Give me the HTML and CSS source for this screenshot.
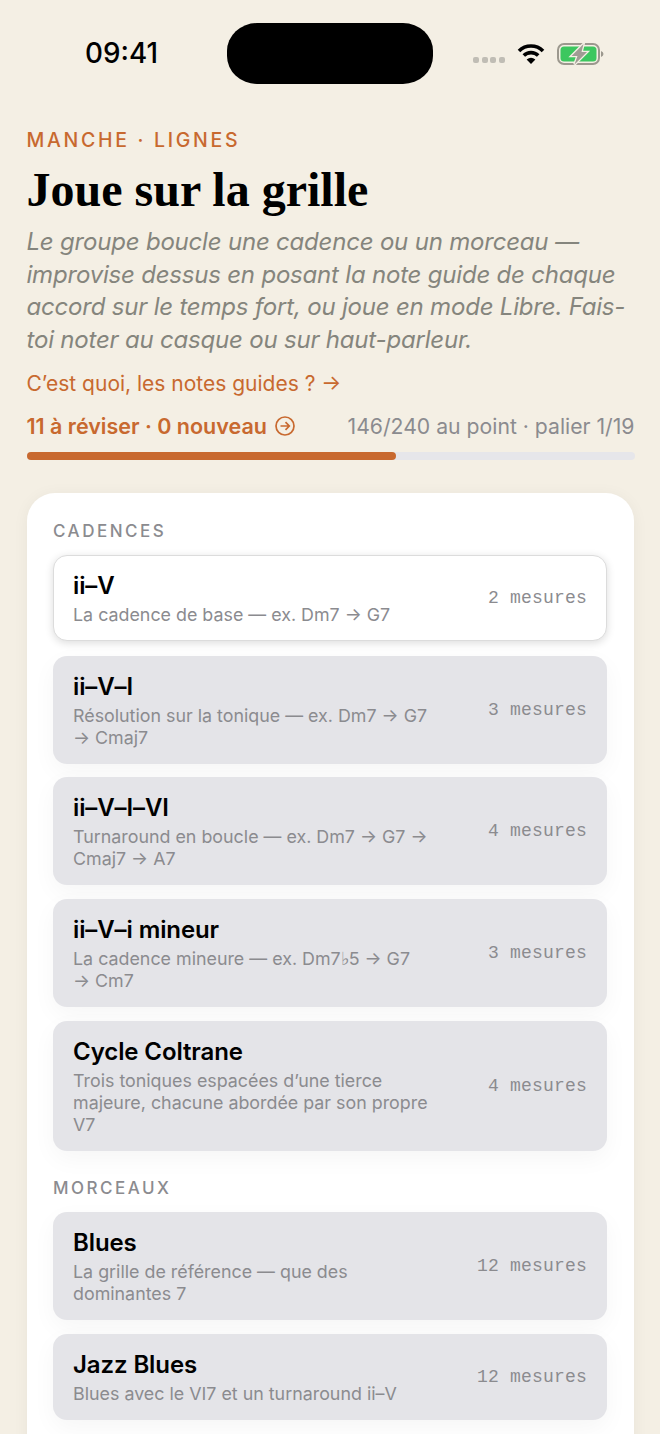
FILE: index.html
```html
<!DOCTYPE html>
<html lang="fr">
<head>
    <meta charset="UTF-8">
    <meta name="viewport" content="width=device-width, initial-scale=1.0">
    <title>Joue sur la grille</title>
    <link rel="stylesheet" href="styles.css">
</head>
<body>
    <div class="statusbar">
        <div class="time">09:41</div>
        <div class="island"></div>
        <div class="status-icons">
            <div class="signal"><span></span><span></span><span></span><span></span></div>
            <svg class="wifi" width="28" height="22" viewBox="0 0 28 22">
                <path d="M2 8A17 17 0 0 1 26 8" fill="none" stroke="#000" stroke-width="3.6"/>
                <path d="M6.8 12.6A10.2 10.2 0 0 1 21.2 12.6" fill="none" stroke="#000" stroke-width="3.6"/>
                <path d="M14 21L9.6 16.4Q14 13.2 18.4 16.4Z" fill="#000"/>
            </svg>
            <svg class="battery" width="47" height="22" viewBox="0 0 47 22">
                <rect x="1" y="1" width="41" height="20" rx="6" fill="none" stroke="#9c988e" stroke-width="2"/>
                <rect x="3.5" y="3.5" width="36" height="15" rx="3.5" fill="#3cc75f"/>
                <path d="M44 8Q46.5 9 46.5 11T44 14Z" fill="#9c988e"/>
                <path d="M26.5 1L14.5 13H20.5L17.5 21.5L30 9H24.5Z" fill="#a09c94" stroke="#f4efe4" stroke-width="2.6" paint-order="stroke"/>
            </svg>
        </div>
    </div>

    <div class="header">
        <div class="eyebrow">MANCHE · LIGNES</div>
        <h1>Joue sur la grille</h1>
        <p class="intro">Le groupe boucle une cadence ou un morceau — improvise dessus en posant la note guide de chaque accord sur le temps fort, ou joue en mode Libre. Fais-toi noter au casque ou sur haut-parleur.</p>
        <a class="guide-link">C’est quoi, les notes guides ? →</a>
        <div class="stats">
            <div class="review">
                <span>11 à réviser · 0 nouveau</span>
                <svg width="20" height="20" viewBox="0 0 20 20" fill="none" stroke="#c8692f" stroke-width="1.7">
                    <circle cx="10" cy="10" r="9"/>
                    <path d="M5.5 10H14.2M10.5 6.2L14.3 10L10.5 13.8"/>
                </svg>
            </div>
            <div class="progress-text">146/240 au point · palier 1/19</div>
        </div>
        <div class="progress"><div class="progress-fill" style="width: 60.8%"></div></div>
    </div>

    <div class="card">
        <div class="section-title">CADENCES</div>
        <div class="row-list">
            <div class="row selected">
                <div class="row-text">
                    <div class="row-title">ii–V</div>
                    <div class="row-sub">La cadence de base — ex. Dm7 → G7</div>
                </div>
                <div class="row-meta">2 mesures</div>
            </div>
            <div class="row">
                <div class="row-text">
                    <div class="row-title">ii–V–I</div>
                    <div class="row-sub">Résolution sur la tonique — ex. Dm7 → G7 → Cmaj7</div>
                </div>
                <div class="row-meta">3 mesures</div>
            </div>
            <div class="row">
                <div class="row-text">
                    <div class="row-title">ii–V–I–VI</div>
                    <div class="row-sub">Turnaround en boucle — ex. Dm7 → G7 → Cmaj7 → A7</div>
                </div>
                <div class="row-meta">4 mesures</div>
            </div>
            <div class="row">
                <div class="row-text">
                    <div class="row-title">ii–V–i mineur</div>
                    <div class="row-sub">La cadence mineure — ex. Dm7♭5 → G7 →&nbsp;Cm7</div>
                </div>
                <div class="row-meta">3 mesures</div>
            </div>
            <div class="row">
                <div class="row-text">
                    <div class="row-title">Cycle Coltrane</div>
                    <div class="row-sub">Trois toniques espacées d’une tierce majeure, chacune abordée par son propre V7</div>
                </div>
                <div class="row-meta">4 mesures</div>
            </div>
        </div>

        <div class="section-title second">MORCEAUX</div>
        <div class="row-list">
            <div class="row">
                <div class="row-text">
                    <div class="row-title">Blues</div>
                    <div class="row-sub">La grille de référence — que des dominantes 7</div>
                </div>
                <div class="row-meta">12 mesures</div>
            </div>
            <div class="row">
                <div class="row-text">
                    <div class="row-title">Jazz Blues</div>
                    <div class="row-sub">Blues avec le VI7 et un turnaround ii–V</div>
                </div>
                <div class="row-meta">12 mesures</div>
            </div>
        </div>
    </div>
</body>
</html>
```

FILE: styles.css
```css
:root {
    --bg-color: #f4efe4;
    --accent-color: #c8692f;
    --row-color: #e4e4e8;
    --text-muted: #85857d;
    --text-grey: #8b8b8f;
}

* {
    margin: 0;
    padding: 0;
    box-sizing: border-box;
}

html, body {
    height: 1434px;
    overflow: hidden;
}

body {
    background-color: var(--bg-color);
    color: #000;
    font-family: Inter, 'Noto Sans', sans-serif;
}

.statusbar {
    display: grid;
    grid-template-columns: 227px 206px 1fr;
    padding-top: 23px;
    height: 83px;
}

.time {
    padding-left: 85px;
    font-size: 27.8px;
    font-weight: 500;
    line-height: 61px;
}

.island {
    background-color: #000;
    border-radius: 30px / 28px;
}

.status-icons {
    display: flex;
    align-items: center;
    padding-left: 40px;
}

.signal {
    display: flex;
    gap: 2.5px;
    margin-top: 13px;
    margin-right: 12px;
}

.signal span {
    width: 6px;
    height: 6px;
    border-radius: 2px;
    background-color: #c0bdb5;
}

.wifi {
    margin-right: 12px;
}

.header {
    padding: 47px 25.5px 0 26.5px;
}

.eyebrow {
    color: var(--accent-color);
    font-size: 19.5px;
    font-weight: 500;
    letter-spacing: 2.7px;
    line-height: 20px;
}

h1 {
    font-family: 'Liberation Serif', serif;
    font-size: 48px;
    font-weight: 700;
    line-height: 60px;
    margin-top: 10px;
}

.intro {
    color: var(--text-muted);
    font-size: 24px;
    font-style: italic;
    letter-spacing: -0.2px;
    line-height: 32.6px;
    margin-top: 6px;
}

.guide-link {
    display: block;
    color: var(--accent-color);
    font-size: 21px;
    line-height: 26px;
    margin-top: 15px;
}

.stats {
    display: flex;
    align-items: center;
    justify-content: space-between;
    margin-top: 15px;
    line-height: 28px;
}

.review {
    display: flex;
    align-items: center;
    gap: 8px;
    color: var(--accent-color);
    font-size: 21.5px;
    font-weight: 600;
}

.progress-text {
    color: var(--text-grey);
    font-size: 21.2px;
}

.progress {
    height: 8px;
    margin-top: 12px;
    border-radius: 4px;
    background-color: #e6e6ea;
}

.progress-fill {
    height: 100%;
    border-radius: 4px;
    background-color: var(--accent-color);
}

.card {
    margin: 33px 26px 0 26.5px;
    padding: 26.8px 27px 60px 26.5px;
    border-radius: 28px;
    background-color: #fff;
    box-shadow: 0 2px 16px rgba(0, 0, 0, 0.05);
}

.section-title {
    color: var(--text-grey);
    font-size: 17px;
    font-weight: 500;
    letter-spacing: 2.5px;
    line-height: 22px;
    margin-bottom: 13px;
}

.section-title.second {
    margin-top: 26.4px;
}

.row-list {
    display: flex;
    flex-direction: column;
    gap: 13.5px;
}

.row {
    display: flex;
    align-items: center;
    justify-content: space-between;
    gap: 50px;
    padding: 15px 20px;
    border-radius: 14px;
    background-color: var(--row-color);
    box-shadow: 0 8px 24px rgba(0, 0, 0, 0.04);
}

.row.selected {
    margin-bottom: 0.8px;
    padding: 14px 19px;
    background-color: #fff;
    border: 1px solid #dcdcdc;
    box-shadow: 0 2px 8px rgba(0, 0, 0, 0.14);
}

.row-text {
    flex: 1;
    min-width: 0;
}

.row-title {
    font-size: 24px;
    font-weight: 600;
    letter-spacing: -0.1px;
    line-height: 32px;
    margin-bottom: 2px;
}

.row-sub {
    color: var(--text-grey);
    font-size: 17.85px;
    line-height: 22.1px;
}

.row-meta {
    flex-shrink: 0;
    color: var(--text-grey);
    font-family: 'Liberation Mono', monospace;
    font-size: 18px;
    letter-spacing: 0.2px;
    white-space: pre;
}
```
